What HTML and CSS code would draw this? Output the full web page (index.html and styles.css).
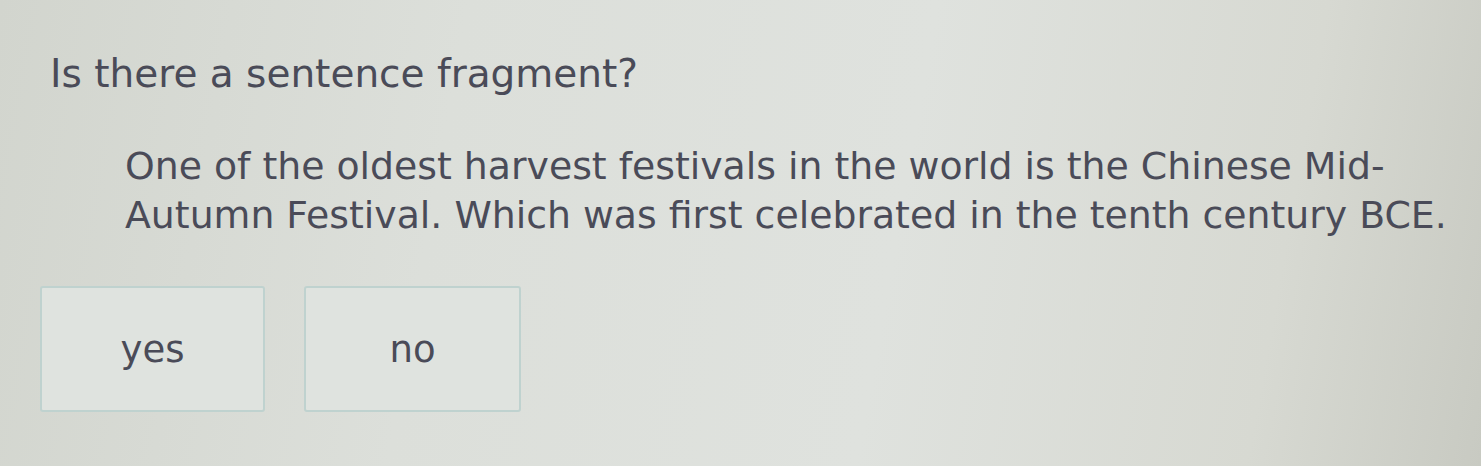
FILE: index.html
```html
<!DOCTYPE html>
<html lang="en">
<head>
<meta charset="utf-8">
<title>Sentence fragment</title>
<link rel="stylesheet" href="styles.css">
</head>
<body>
  <main class="question">
    <h1 class="prompt">Is there a sentence fragment?</h1>
    <p class="passage">One of the oldest harvest festivals in the world is the Chinese Mid-<br>Autumn Festival. Which was first celebrated in the tenth century BCE.</p>
    <div class="choices">
      <button class="choice choice-yes" type="button">yes</button>
      <button class="choice choice-no" type="button">no</button>
    </div>
  </main>
</body>
</html>
```

FILE: styles.css
```css
html, body {
  margin: 0;
  height: 100%;
}

body {
  background: linear-gradient(100deg, #d2d5ce 0%, #dcdfda 30%, #dfe2de 60%, #d7d9d2 85%, #c8cac2 100%);
  font-family: "DejaVu Sans", sans-serif;
  color: #4a4b58;
  overflow: hidden;
}

.question {
  padding: 46px 0 0 50px;
}

.prompt {
  margin: 0;
  font-size: 39px;
  font-weight: normal;
  line-height: 56px;
}

.passage {
  margin: 40px 0 0 75px;
  font-size: 37.8px;
  line-height: 49px;
}

.choices {
  display: flex;
  gap: 39px;
  margin: 46px 0 0 -10px;
}

.choice {
  font-family: "DejaVu Sans", sans-serif;
  font-size: 37px;
  color: #4a4b58;
  height: 126px;
  padding: 0;
  background: #dfe3df;
  border: 2px solid #bfd2cf;
  border-radius: 3px;
}

.choice-yes {
  width: 225px;
}

.choice-no {
  width: 217px;
}
```
